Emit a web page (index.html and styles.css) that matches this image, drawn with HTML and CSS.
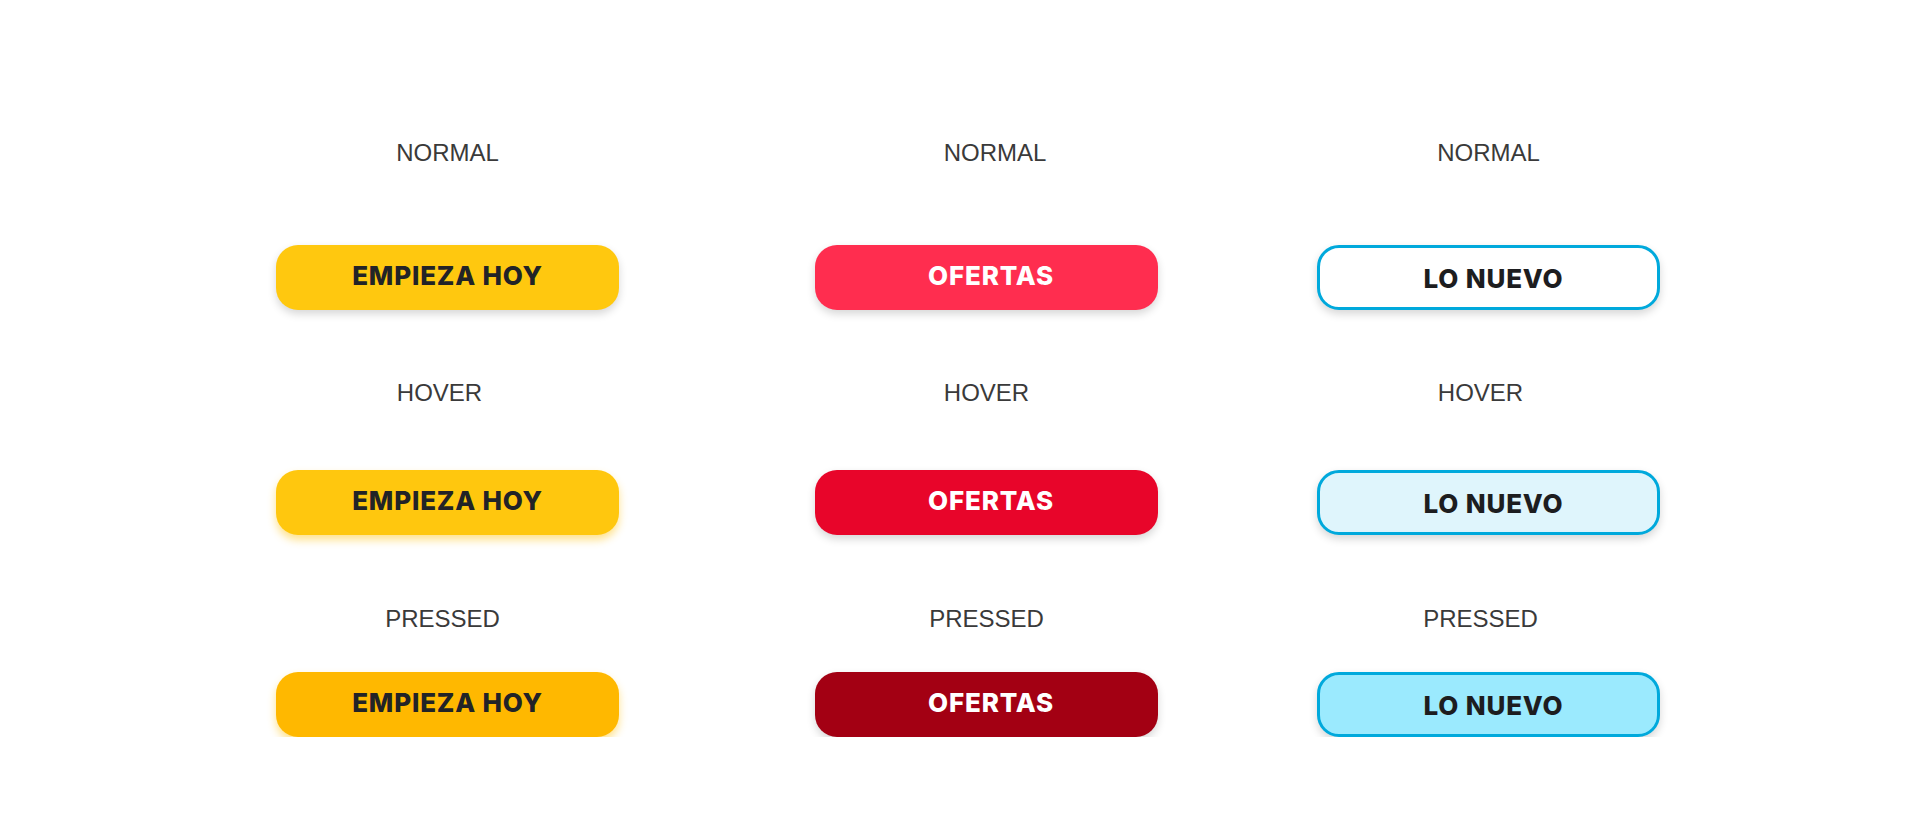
FILE: index.html
```html
<!DOCTYPE html>
<html lang="en">
<head>
  <meta charset="UTF-8">
  <meta name="viewport" content="width=device-width, initial-scale=1.0">
  <title>Estados de botones</title>
  <link rel="stylesheet" href="styles.css">
</head>
<body>
  <div class="board">
    <!-- Amarillo -->
    <div class="column col-yellow">
      <p class="label">NORMAL</p>
      <button class="btn btn-yellow">EMPIEZA HOY</button>
      <p class="label label-hover shift-l">HOVER</p>
      <button class="btn btn-yellow is-hover">EMPIEZA HOY</button>
      <p class="label label-pressed shift-l-sm">PRESSED</p>
      <button class="btn btn-yellow is-pressed">EMPIEZA HOY</button>
    </div>

    <!-- Rojo -->
    <div class="column col-red">
      <p class="label shift-r">NORMAL</p>
      <button class="btn btn-red">OFERTAS</button>
      <p class="label label-hover">HOVER</p>
      <button class="btn btn-red is-hover">OFERTAS</button>
      <p class="label label-pressed">PRESSED</p>
      <button class="btn btn-red is-pressed">OFERTAS</button>
    </div>

    <!-- Azul (outline) -->
    <div class="column col-blue">
      <p class="label">NORMAL</p>
      <button class="btn btn-outline">LO NUEVO</button>
      <p class="label label-hover shift-l">HOVER</p>
      <button class="btn btn-outline is-hover">LO NUEVO</button>
      <p class="label label-pressed shift-l">PRESSED</p>
      <button class="btn btn-outline is-pressed">LO NUEVO</button>
    </div>
  </div>
</body>
</html>
```

FILE: styles.css
```css
body {
  margin: 0;
  padding: 0;
  background-color: #fff;
  font-family: "Liberation Sans", Arial, sans-serif;
}

.board {
  display: flex;
  padding: 139px 0 0 276px;
}

.column {
  display: flex;
  flex-direction: column;
  width: 343px;
}

.col-red {
  margin-left: 196px;
}

.col-blue {
  margin-left: 159px;
}

.label {
  margin: 0 0 78px;
  height: 28px;
  line-height: 28px;
  font-size: 24px;
  color: #3a3a3a;
  text-align: center;
}

.label-hover {
  margin: 69px 0 63px;
}

.label-pressed {
  margin: 70px 0 39px;
}

.shift-l {
  padding-right: 16px;
}

.shift-l-sm {
  padding-right: 10px;
}

.shift-r {
  padding-left: 17px;
}

.btn {
  height: 65px;
  padding: 0 0 4px;
  border: none;
  border-radius: 22px;
  font-family: Inter, "Open Sans", sans-serif;
  font-weight: 800;
  font-size: 26px;
  letter-spacing: 0.8px;
  color: #222327;
  box-shadow: 0 4px 8px rgba(0, 0, 0, 0.16);
  cursor: pointer;
}

.btn-yellow {
  background-color: #ffc80f;
}

.btn-yellow.is-hover {
  background-color: #ffc70e;
  box-shadow: 0 5px 9px rgba(255, 190, 0, 0.45);
}

.btn-yellow.is-pressed {
  background-color: #ffb800;
  box-shadow: 0 5px 9px rgba(255, 190, 0, 0.45);
}

.btn-red {
  background-color: #ff2d4f;
  color: #fff;
  padding-left: 9px;
}

.btn-red.is-hover {
  background-color: #e8052a;
}

.btn-red.is-pressed {
  background-color: #a30013;
}

.btn-outline {
  background-color: #fff;
  border: 3px solid #00a9dc;
  padding: 1px 0 0 10px;
  color: #1d1d1f;
}

.btn-outline.is-hover {
  background-color: #dff5fc;
}

.btn-outline.is-pressed {
  background-color: #9beafe;
}
```
